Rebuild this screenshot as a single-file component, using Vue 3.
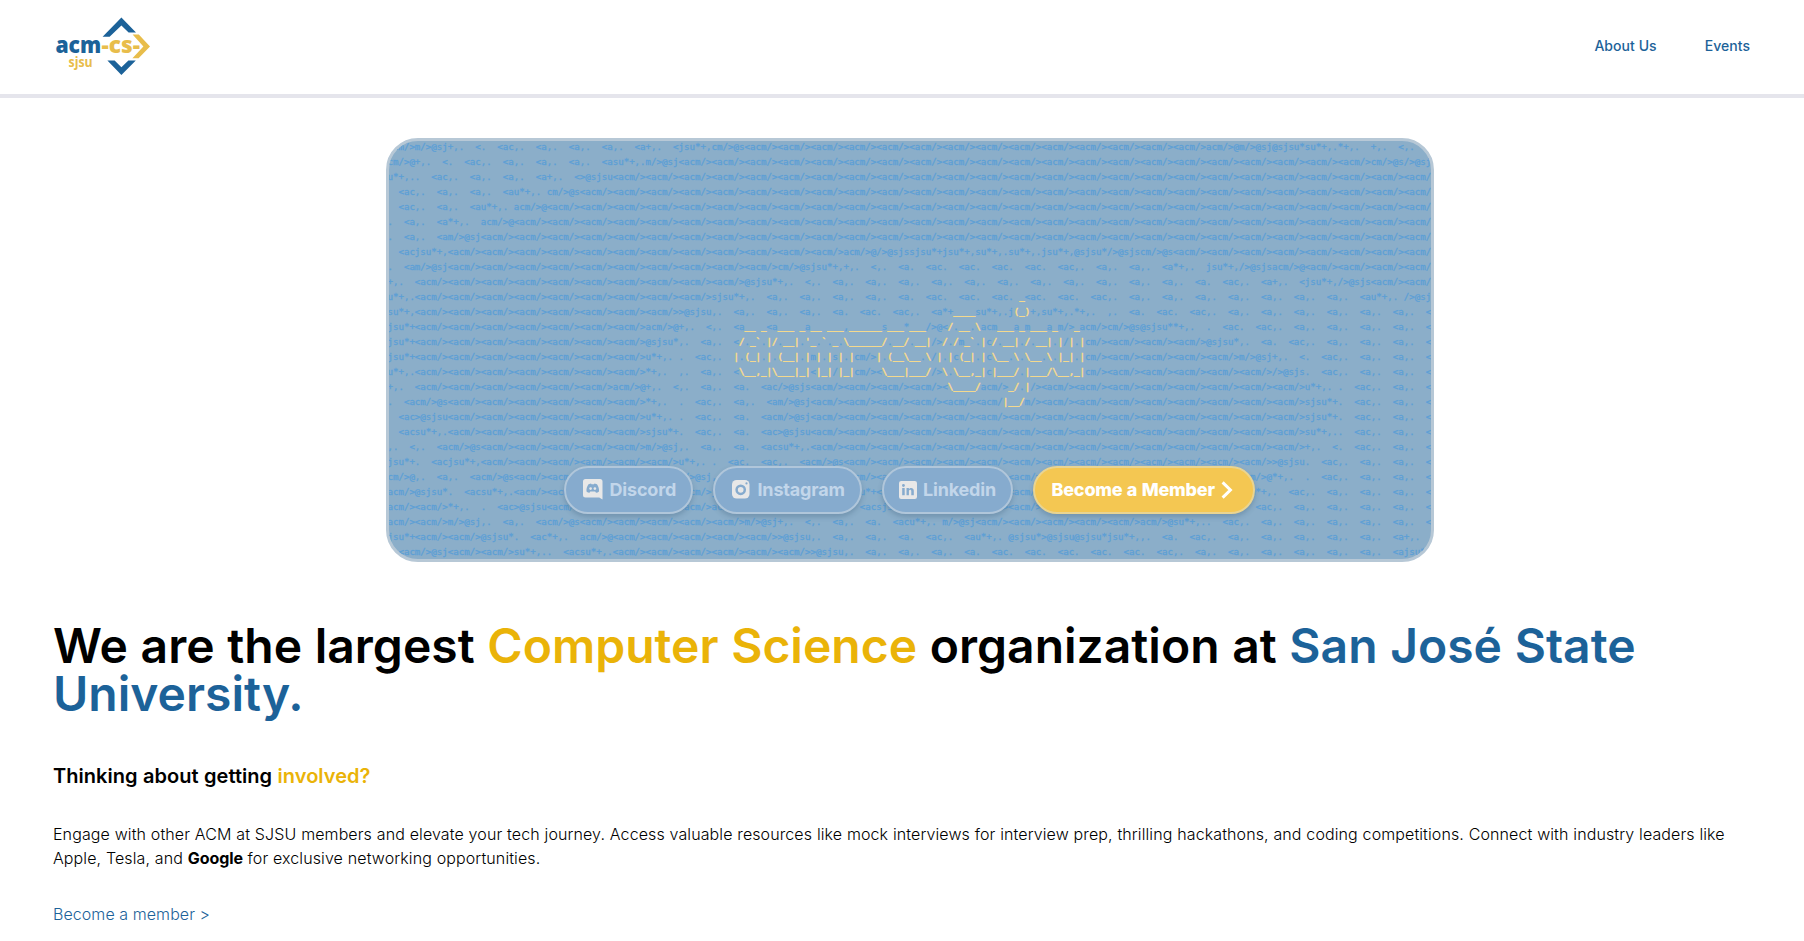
<script setup>
const COLS = 190
const TAG = '<acm/>'

// Each row lists column/text pairs; "#n" stands for n repeated tags.
const waveRows = [
  [0, 'acm/>m/>@sj+,.', 16, '<.', 20, '<ac,.', 27, '<a,.', 33, '<a,.', 39, '<a,.', 45, '<a+,.', 52, '<jsu*+,cm/>@s', 65, '#14', 149, 'acm/>@m/>@sj@sjsu*su*+,.*+,.', 179, '+,.', 184, '<,.'],
  [0, 'cm/>@+,.', 10, '<.', 14, '<ac,.', 21, '<a,.', 27, '<a,.', 33, '<a,.', 39, '<asu*+,.m/>@sj', 53, '#21', 179, 'cm/>@s/>@sj'],
  [0, 'u*+,..', 8, '<ac,.', 15, '<a,.', 21, '<a,.', 27, '<a+,.', 34, '<>@sjsu', 41, '#25'],
  [2, '<ac,.', 9, '<a,.', 15, '<a,.', 21, '<au*+,.', 29, 'cm/>@s', 35, '#26'],
  [2, '<ac,.', 9, '<a,.', 15, '<au*+,.', 23, 'acm/>@', 29, '#27'],
  [0, '.', 3, '<a,.', 9, '<a*+,.', 17, 'acm/>@', 23, '#28'],
  [0, '.', 3, '<a,.', 9, '<am/>@sj', 17, '#29'],
  [2, '<acjsu*+,', 11, '#12', 83, 'acm/>@/>@sjssjsu*+jsu*+,su*+,.su*+,.jsu*+,@sjsu*/>@sjscm/>@s', 143, '#8'],
  [0, '.', 3, '<am/>@sj', 11, '#10', 71, 'cm/>@sjsu*+,+,.', 88, '<,.', 93, '<a.', 98, '<ac.', 104, '<ac.', 110, '<ac.', 116, '<ac.', 122, '<ac,.', 129, '<a,.', 135, '<a,.', 141, '<a*+,.', 149, 'jsu*+,/>@sjsacm/>@', 167, '#4'],
  [0, '+,.', 5, '#10', 65, '@sjsu*+,.', 76, '<,.', 81, '<a,.', 87, '<a,.', 93, '<a,.', 99, '<a,.', 105, '<a,.', 111, '<a,.', 117, '<a,.', 123, '<a,.', 129, '<a,.', 135, '<a,.', 141, '<a,.', 147, '<a.', 152, '<ac,.', 159, '<a+,.', 166, '<jsu*+,/>@sjs', 179, '#2'],
  [0, 'u*+,.', 5, '#9', 59, 'sjsu*+,.', 69, '<a,.', 75, '<a,.', 81, '<a,.', 87, '<a,.', 93, '<a.', 98, '<ac.', 104, '<ac.', 110, '<ac.', 116, '<ac.', 122, '<ac.', 128, '<ac,.', 135, '<a,.', 141, '<a,.', 147, '<a,.', 153, '<a,.', 159, '<a,.', 165, '<a,.', 171, '<a,.', 177, '<au*+,.', 185, '/>@sj'],
  [0, 'su*+,', 5, '#8', 53, '>@sjsu,.', 63, '<a,.', 69, '<a,.', 75, '<a,.', 81, '<a.', 86, '<ac.', 92, '<ac,.', 99, '<a*+', 107, 'su*+,.j', 117, '+,su*+,.*+,.', 131, ',.', 135, '<a.', 140, '<ac.', 146, '<ac,.', 153, '<a,.', 159, '<a,.', 165, '<a,.', 171, '<a,.', 177, '<a,.', 183, '<a,.', 189, '<'],
  [0, 'jsu*+', 5, '#7', 47, 'acm/>@+,.', 58, '<,.', 63, '<a', 69, '<a', 76, 'a', 83, ',', 90, 's', 94, '*', 98, '/>@<', 103, '.', 106, '.', 108, 'acm', 114, 'a', 116, 'm', 120, 'a', 122, 'm/>', 126, 'acm/>cm/>@s@sjsu**+,.', 149, '.', 152, '<ac.', 158, '<ac,.', 165, '<a,.', 171, '<a,.', 177, '<a,.', 183, '<a,.', 189, '<'],
  [0, 'jsu*+', 5, '#7', 47, '@sjsu*,.', 57, '<a,.', 63, '<', 65, '.', 68, '.', 71, '.', 75, '.', 78, '.', 80, '.', 82, '.', 91, '.', 95, '.', 99, '/>', 102, '.', 104, 'm', 107, '.', 109, 'c', 111, '.', 115, '.', 117, '.', 121, '.', 123, '/', 125, '.', 127, 'cm/>', 131, '#3', 149, '@sjsu*,.', 159, '<a.', 164, '<ac,.', 171, '<a,.', 177, '<a,.', 183, '<a,.', 189, '<'],
  [0, 'jsu*+', 5, '#7', 47, 'u*+,.', 53, '.', 56, '<ac,.', 64, '.', 68, '.', 70, '.', 75, '.', 77, 'm', 79, '.', 81, 's', 83, '.', 85, 'cm/>', 90, '.', 97, '.', 99, '/', 101, '.', 103, 'c', 107, '.', 109, 'c', 113, '.', 115, '.', 119, '.', 121, '.', 125, '.', 127, 'cm/>', 131, '#4', 155, 'm/>@sj+,.', 166, '<.', 170, '<ac,.', 177, '<a,.', 183, '<a,.', 189, '<'],
  [0, 'u*+,.', 5, '#7', 47, '*+,.', 53, ',.', 57, '<a,.', 63, '<', 77, '<', 81, '/', 85, 'cm/><', 99, '/>', 102, '.', 109, 'c', 115, '.', 127, 'cm/>', 131, '#5', 161, '/>@sjs.', 170, '<ac,.', 177, '<a,.', 183, '<a,.', 189, '<'],
  [0, '+,.', 5, '#6', 41, 'acm/>@+,.', 52, '<,.', 57, '<a,.', 63, '<a.', 68, '<ac/>@sjs', 77, '#4', 101, '<', 108, 'acm/>', 115, '.', 117, '/>', 119, '#8', 167, 'u*+,.', 173, '.', 176, '<ac,.', 183, '<a,.', 189, '<'],
  [0, '.', 3, '<acm/>@s', 11, '#6', 47, '*+,.', 53, '.', 56, '<ac,.', 63, '<a,.', 69, '<am/>@sj', 77, '#5', 107, '<acm/', 116, 'm/>', 119, '#8', 167, 'sjsu*+.', 176, '<ac,.', 183, '<a,.', 189, '<'],
  [2, '<ac>@sjsu', 11, '#6', 47, 'u*+,.', 53, '.', 56, '<ac,.', 63, '<a.', 68, '<acm/>@sj', 77, '#15', 167, 'sjsu*+.', 176, '<ac,.', 183, '<a,.', 189, '<'],
  [2, '<acsu*+,.', 11, '#6', 47, 'sjsu*+.', 56, '<ac,.', 63, '<a.', 68, '<ac>@sjsu', 77, '#15', 167, 'su*+,..', 176, '<ac,.', 183, '<a,.', 189, '<'],
  [0, ',.', 4, '<,.', 9, '<acm/>@s', 17, '#5', 47, 'm/>@sj,.', 57, '<a,.', 63, '<a.', 68, '<acsu*+,.', 77, '#15', 167, '+,.', 172, '<.', 176, '<ac,.', 183, '<a,.', 189, '<'],
  [0, 'jsu*+.', 8, '<acjsu*+,', 17, '#6', 53, 'u*+,.', 59, '.', 62, '<ac.', 68, '<ac,.', 75, '<acm/>@s', 83, '#13', 161, '>@sjsu.', 170, '<ac,.', 177, '<a,.', 183, '<a,.', 189, '<'],
  [0, 'cm/>@,.', 9, '<a,.', 15, '<acm/>@s', 23, '#5', 53, 'm/>@sj,.', 63, '<a,.', 71, '#14', 155, 'acm/>@*+,.', 167, '.', 170, '<ac,.', 177, '<a,.', 183, '<a,.', 189, '<'],
  [0, 'acm/>@sjsu*.', 14, '<acsu*+,.', 23, '#6', 59, 'jsu*+,.', 68, '<a,.', 83, 'sjsu*+', 89, '#11', 155, 'jsu*+,.', 164, '<ac,.', 171, '<a,.', 177, '<a,.', 183, '<a,.', 189, '<'],
  [0, 'acm/>', 5, '#1', 11, '*+,.', 17, '.', 20, '<ac>@sjsu', 29, '#5', 59, 'acm/>@sjsu*+,.', 86, '<acsjsu*+', 95, '#9', 149, 'su*+,.', 158, '<ac,.', 165, '<a,.', 171, '<a,.', 177, '<a,.', 183, '<a,.', 189, '<'],
  [0, 'acm/>', 5, '#1', 11, 'm/>@sj,.', 21, '<a,.', 27, '<acm/>@s', 35, '#5', 65, 'm/>@sj+,.', 76, '<,.', 81, '<a,.', 87, '<a.', 92, '<acu*+,.', 101, 'm/>@sj', 107, '#5', 137, 'acm/>@su*+,..', 152, '<ac,.', 159, '<a,.', 165, '<a,.', 171, '<a,.', 177, '<a,.', 183, '<a,.', 189, '<'],
  [0, 'jsu*+', 5, '#2', 17, '@sjsu*.', 26, '<ac*+,.', 35, 'acm/>@', 41, '#5', 71, '>@sjsu,.', 81, '<a,.', 87, '<a,.', 93, '<a.', 98, '<ac,.', 105, '<au*+,.', 113, '@sjsu*>@sjsu@sjsu*jsu*+,,.', 141, '<a.', 146, '<ac,.', 153, '<a,.', 159, '<a,.', 165, '<a,.', 171, '<a,.', 177, '<a,.', 183, '<a+,.'],
  [2, '<acm/>@sj', 11, '#2', 23, 'su*+,..', 32, '<acsu*+,.', 41, '#6', 77, '>@sjsu,.', 87, '<a,.', 93, '<a,.', 99, '<a,.', 105, '<a.', 110, '<ac.', 116, '<ac.', 122, '<ac.', 128, '<ac.', 134, '<ac.', 140, '<ac,.', 147, '<a,.', 153, '<a,.', 159, '<a,.', 165, '<a,.', 171, '<a,.', 177, '<a,.', 183, '<ajsu*']
]

const bannerRows = [
  [115, '_'],
  [103, '____', 114, '(_)'],
  [65, '__', 68, '_', 71, '___', 75, '_', 77, '__', 80, '___', 84, '______', 91, '___', 95, '___', 102, '/', 104, '__', 107, '\\', 111, '___', 115, '_', 117, '___', 121, '_', 125, '_'],
  [64, '/ _` |/ __| \'_ ` _ \\______/ __/ __|', 101, '/ / _` | / __| / __| | | |'],
  [63, '| (_| | (__| | | | | |', 89, '| (__\\__ \\', 100, '| | (_| | \\__ \\ \\__ \\ |_| |'],
  [64, '\\__,_|\\___|_| |_| |_|', 90, '\\___|___/', 101, '\\ \\__,_| |___/ |___/\\__,_|'],
  [102, '\\____/', 113, '_/ |'],
  [112, '|__/']
]

function layRow(parts) {
  let line = ''
  for (let i = 0; i < parts.length; i += 2) {
    const text = parts[i + 1]
    line = line.padEnd(parts[i]) + (text[0] === '#' ? TAG.repeat(Number(text.slice(1))) : text)
  }
  return line.slice(0, COLS).padEnd(COLS)
}

const wave = waveRows.map(layRow).join('\n')
const banner = '\n'.repeat(10) + bannerRows.map(layRow).join('\n')
</script>

<template>
  <div class="page">
    <header class="header">
      <svg class="logo" width="100" height="64" viewBox="50 12 100 64">
        <path class="blue" d="M102.6 36.7L121.4 17.6L136 32.4H128.6L121.4 25.4L109.6 36.7Z" />
        <path class="blue" d="M107.4 60.4H114.6L121.4 67.2L128.4 60.4H135.8L121.4 75Z" />
        <path class="gold" d="M132.6 34.4H138.8L150 46.4L138.6 58.2H132.4L143.4 46.4Z" />
        <text class="blue" x="55.4" y="53.4" font-size="22.5" textLength="45.8" lengthAdjust="spacingAndGlyphs">acm</text>
        <text class="gold" x="101.6" y="53.4" font-size="22.5" textLength="38.4" lengthAdjust="spacingAndGlyphs">-cs-</text>
        <text class="gold small" x="68.6" y="66.8" font-size="14" textLength="24" lengthAdjust="spacingAndGlyphs">sjsu</text>
      </svg>
      <nav class="nav">
        <a>About Us</a>
        <a>Events</a>
      </nav>
    </header>

    <main class="main">
      <section class="hero">
        <pre class="ascii wave">{{ wave }}</pre>
        <pre class="ascii banner">{{ banner }}</pre>
        <div class="actions">
          <a class="pill discord">
            <svg width="20" height="21" viewBox="0 0 20 21">
              <path class="icon" d="M2.5 0H17A2.5 2.5 0 0 1 19.5 2.5V20.5L16.2 18.5H2.5A2.5 2.5 0 0 1 0 16V2.5A2.5 2.5 0 0 1 2.5 0Z" />
              <path class="cut" d="M5.5 5.3L8 4.6L8.5 5.3H11L11.5 4.6L14 5.3C15.6 7.6 16.2 10 16 12.4Q14.7 13.5 13 13.8L12.2 12.5H7.3L6.5 13.8Q4.8 13.5 3.5 12.4C3.3 10 3.9 7.6 5.5 5.3Z" />
              <circle class="icon" cx="7.6" cy="9.6" r="1.3" /><circle class="icon" cx="11.9" cy="9.6" r="1.3" />
            </svg>
            <span>Discord</span>
          </a>
          <a class="pill instagram">
            <svg width="18" height="19" viewBox="0 0 18 19">
              <rect class="icon" width="17.5" height="18.5" rx="4.6" />
              <circle class="ring" cx="8.7" cy="9.8" r="4.1" />
              <circle class="cut" cx="14.5" cy="3.4" r="1.1" />
            </svg>
            <span>Instagram</span>
          </a>
          <a class="pill linkedin">
            <svg width="18" height="18" viewBox="0 0 18 18">
              <rect class="icon" width="18" height="18" rx="2.2" />
              <path class="cut" d="M3.2 7H5.7V14.2H3.2ZM7.5 7H9.9V8.1C11.2 6.2 14.8 6.4 14.8 9.8V14.2H12.3V10.4C12.3 8.3 9.9 8.4 9.9 10.4V14.2H7.5Z" />
              <circle class="cut" cx="4.45" cy="4.5" r="1.4" />
            </svg>
            <span>Linkedin</span>
          </a>
          <a class="pill member">
            <span>Become a Member</span>
            <svg width="12" height="18" viewBox="0 0 12 18">
              <path class="chevron" d="M1.6 1.4L9.4 9L1.6 16.6" />
            </svg>
          </a>
        </div>
      </section>

      <h1>We are the largest <em class="yellow">Computer Science</em> organization at <em class="navy">San José State University.</em></h1>
      <h2>Thinking about getting <em class="yellow">involved?</em></h2>
      <p>Engage with other ACM at SJSU members and elevate your tech journey. Access valuable resources like mock interviews for interview prep, thrilling hackathons, and coding competitions. Connect with industry leaders like Apple, Tesla, and <strong>Google</strong> for exclusive networking opportunities.</p>
      <a class="join">Become a member &gt;</a>
    </main>
  </div>
</template>

<style>
body {
  background: #fff;
}
</style>

<style scoped>
.page {
  box-sizing: border-box;
  height: 941px;
  overflow: hidden;
  font-family: Inter, sans-serif;
  color: #000;
}
.header {
  box-sizing: border-box;
  display: flex;
  justify-content: space-between;
  height: 98px;
  padding: 12px 54px 0 50px;
  border-bottom: 4px solid #e5e5ec;
}
.logo text {
  font-family: "Open Sans", sans-serif;
  font-weight: 800;
}
.logo .small {
  font-weight: 700;
}
.logo .blue {
  fill: #1c6299;
}
.logo .gold {
  fill: #e8bd4b;
}
.nav {
  display: flex;
  gap: 48px;
  padding-top: 24px;
  font-size: 14px;
  font-weight: 550;
  letter-spacing: 0.05px;
  line-height: 20px;
  color: #1c6299;
}
.main {
  padding: 40px 54px 0 53px;
}
.hero {
  box-sizing: border-box;
  display: grid;
  grid-template-columns: 1042px;
  justify-content: center;
  width: 1048px;
  height: 424px;
  margin-left: 333px;
  border: 3px solid #b7c8d6;
  border-radius: 32px;
  overflow: hidden;
  background: #8baec9;
}
.ascii {
  grid-area: 1 / 1;
  margin: -1px 0 0 -1.6px;
  font-family: "DejaVu Sans Mono", monospace;
  font-size: 9.132px;
  line-height: 15px;
  white-space: pre;
}
.wave {
  color: #5c9fd6;
  -webkit-text-stroke: 0.3px #5c9fd6;
}
.banner {
  color: #f8db8c;
  -webkit-text-stroke: 0.5px #f8db8c;
}
.actions {
  grid-area: 1 / 1;
  display: flex;
  gap: 20px;
  align-self: start;
  justify-self: center;
  padding: 325px 1px 0 0;
}
.pill {
  box-sizing: border-box;
  display: flex;
  align-items: center;
  height: 48px;
  border: 2px solid #b0c6da;
  border-radius: 24px;
  background: #86abce;
  box-shadow: 0 3px 5px rgba(40, 70, 100, 0.25);
  color: #c2d6ea;
  font-size: 18px;
  font-weight: 700;
  letter-spacing: -0.18px;
  white-space: nowrap;
  padding: 0 0 1px 16.5px;
}
.discord {
  width: 129px;
  gap: 7px;
}
.instagram {
  width: 149px;
  gap: 8px;
}
.linkedin {
  width: 131px;
  gap: 6px;
  padding-left: 15px;
}
.member {
  width: 222px;
  gap: 6px;
  border-color: #e9d491;
  background: #f4c752;
  color: #fff;
  font-weight: 800;
  letter-spacing: -0.2px;
  word-spacing: 0.7px;
}
.icon {
  fill: #e8e8e8;
}
.cut {
  fill: #86abce;
}
.ring {
  fill: none;
  stroke: #86abce;
  stroke-width: 2.5;
}
.chevron {
  fill: none;
  stroke: #fff;
  stroke-width: 3;
}
em {
  font-style: normal;
}
h1 {
  margin: 60px 0 0;
  font-size: 48px;
  font-weight: 590;
  letter-spacing: 0.02px;
  word-spacing: 0.5px;
  line-height: 48px;
}
h2 {
  margin: 44px 0 0;
  font-size: 20px;
  font-weight: 590;
  letter-spacing: 0.03px;
  word-spacing: 0.4px;
  line-height: 28px;
}
p {
  margin: 32px 0 0;
  font-size: 16px;
  font-weight: 300;
  letter-spacing: 0.1px;
  word-spacing: 0.2px;
  line-height: 24px;
}
strong {
  font-weight: 700;
  letter-spacing: -0.1px;
}
.join {
  display: block;
  margin-top: 32px;
  font-size: 16px;
  font-weight: 300;
  letter-spacing: 0.07px;
  line-height: 24px;
  color: #1c6299;
}
.yellow {
  color: #eab308;
}
.navy {
  color: #1c6299;
}
</style>
